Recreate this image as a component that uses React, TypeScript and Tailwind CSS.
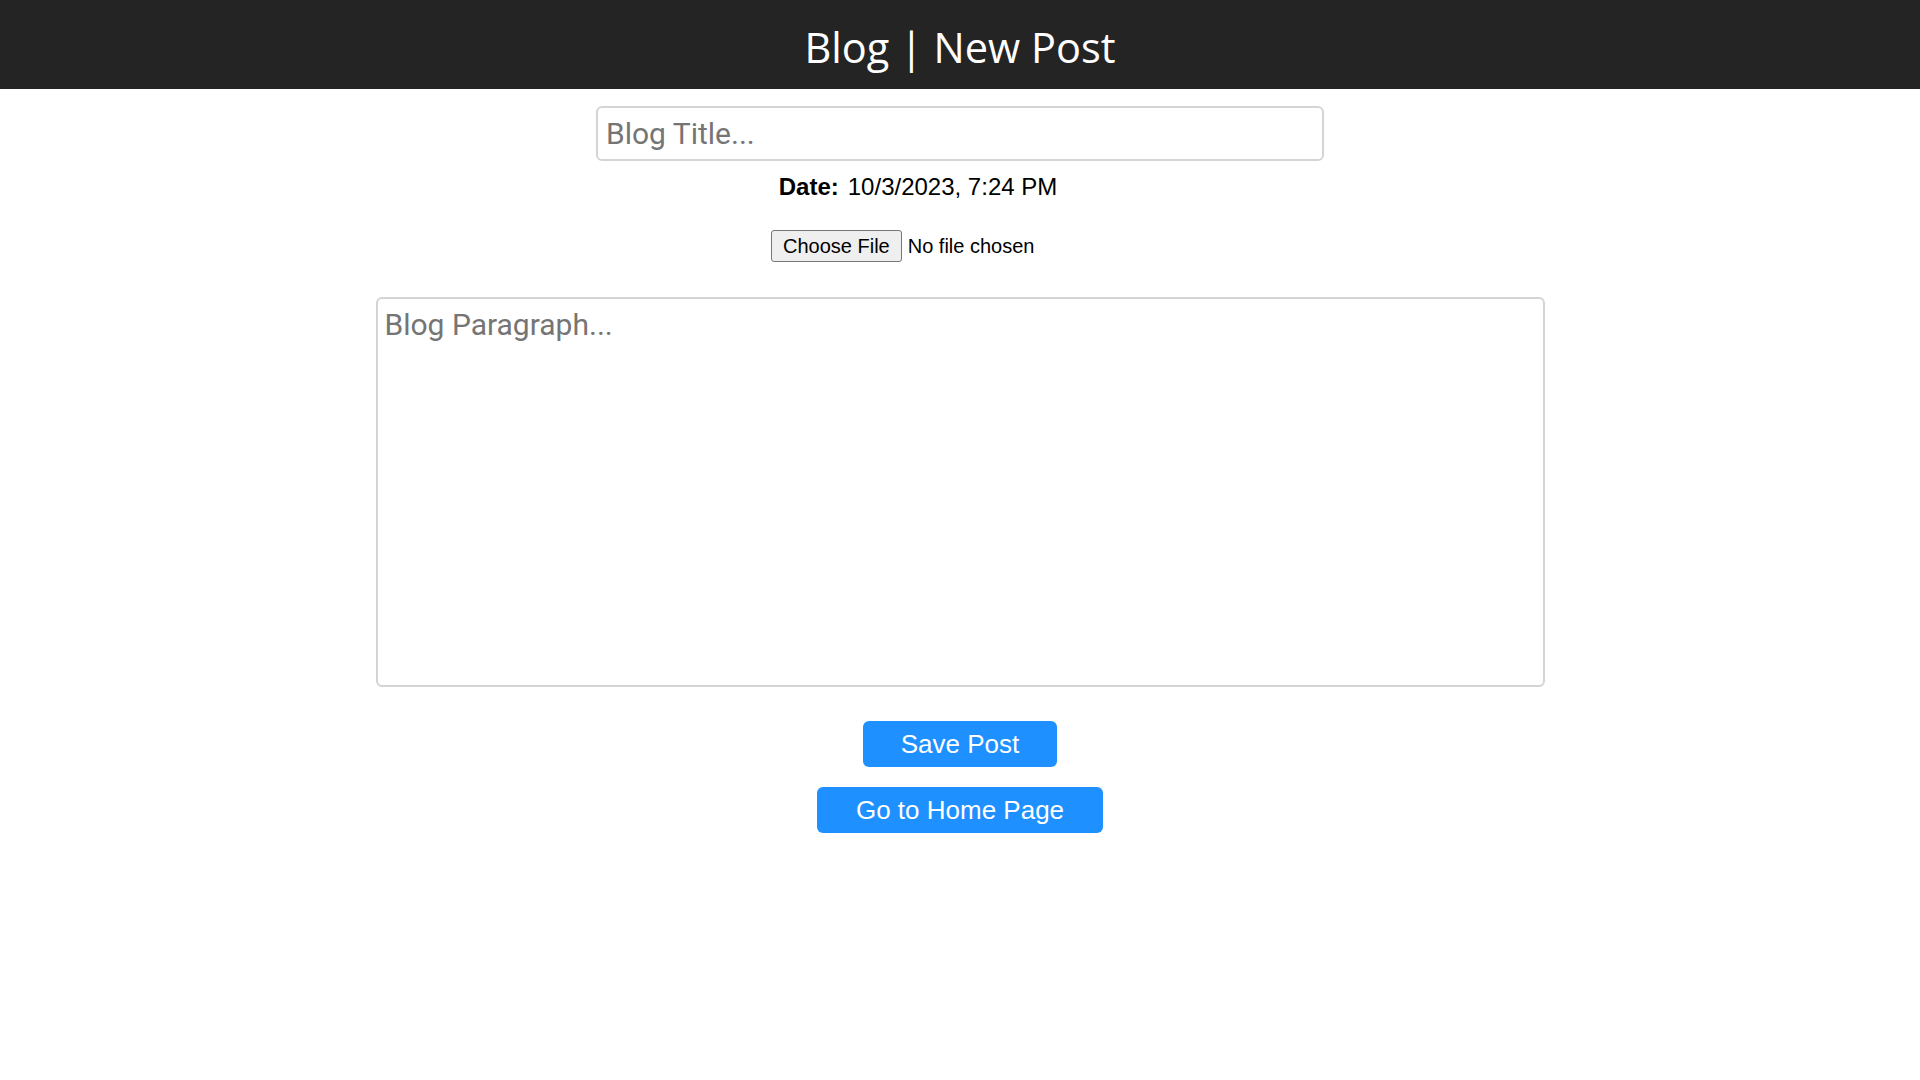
const NewPost = () => {
  return (
    <div className="min-h-screen bg-white">
      <header className="h-[89px] bg-[#242424] flex items-center justify-center pt-[6px]">
        <h1 className="text-white text-[41.5px] leading-none font-normal font-['Open_Sans','Noto_Sans',sans-serif]">
          Blog | New Post
        </h1>
      </header>

      <main className="flex flex-col items-center">
        <input
          type="text"
          placeholder="Blog Title..."
          className="mt-[17px] w-[728px] h-[55px] border-2 border-[#d4d4d4] rounded-[6px] pl-[8px] pr-2 text-[30px] font-['Roboto',sans-serif] text-black placeholder:text-[#757575] outline-none"
        />

        <p className="mt-[12px] mr-[84px] text-[24px] leading-[27px] text-black font-['Liberation_Sans',Arial,sans-serif]">
          <span className="font-bold mr-[9px]">Date:</span>
          10/3/2023, 7:24 PM
        </p>

        <input
          type="file"
          className="mt-[30px] w-[378px] text-[20px] leading-[24px] text-black font-['Liberation_Sans',Arial,sans-serif] file:border file:border-[#767676] file:bg-[#efefef] file:rounded-[3px] file:px-[11px] file:py-[3px] file:mr-[6px] file:text-black"
        />

        <textarea
          placeholder="Blog Paragraph..."
          className="mt-[35px] w-[1169px] h-[390px] border-2 border-[#d4d4d4] rounded-[6px] pt-[8px] pl-[7px] pr-2 text-[30px] leading-[35px] font-['Roboto',sans-serif] text-black placeholder:text-[#757575] outline-none resize-none"
        />

        <button className="mt-[34px] h-[46px] px-[38px] rounded-[6px] bg-[#1e90ff] text-white text-[26px] leading-[30px] font-['Liberation_Sans',Arial,sans-serif]">
          Save Post
        </button>
        <button className="mt-[20px] h-[46px] px-[39px] rounded-[6px] bg-[#1e90ff] text-white text-[26px] leading-[30px] font-['Liberation_Sans',Arial,sans-serif]">
          Go to Home Page
        </button>
      </main>
    </div>
  );
};

export default function App() {
  return <NewPost />;
}
